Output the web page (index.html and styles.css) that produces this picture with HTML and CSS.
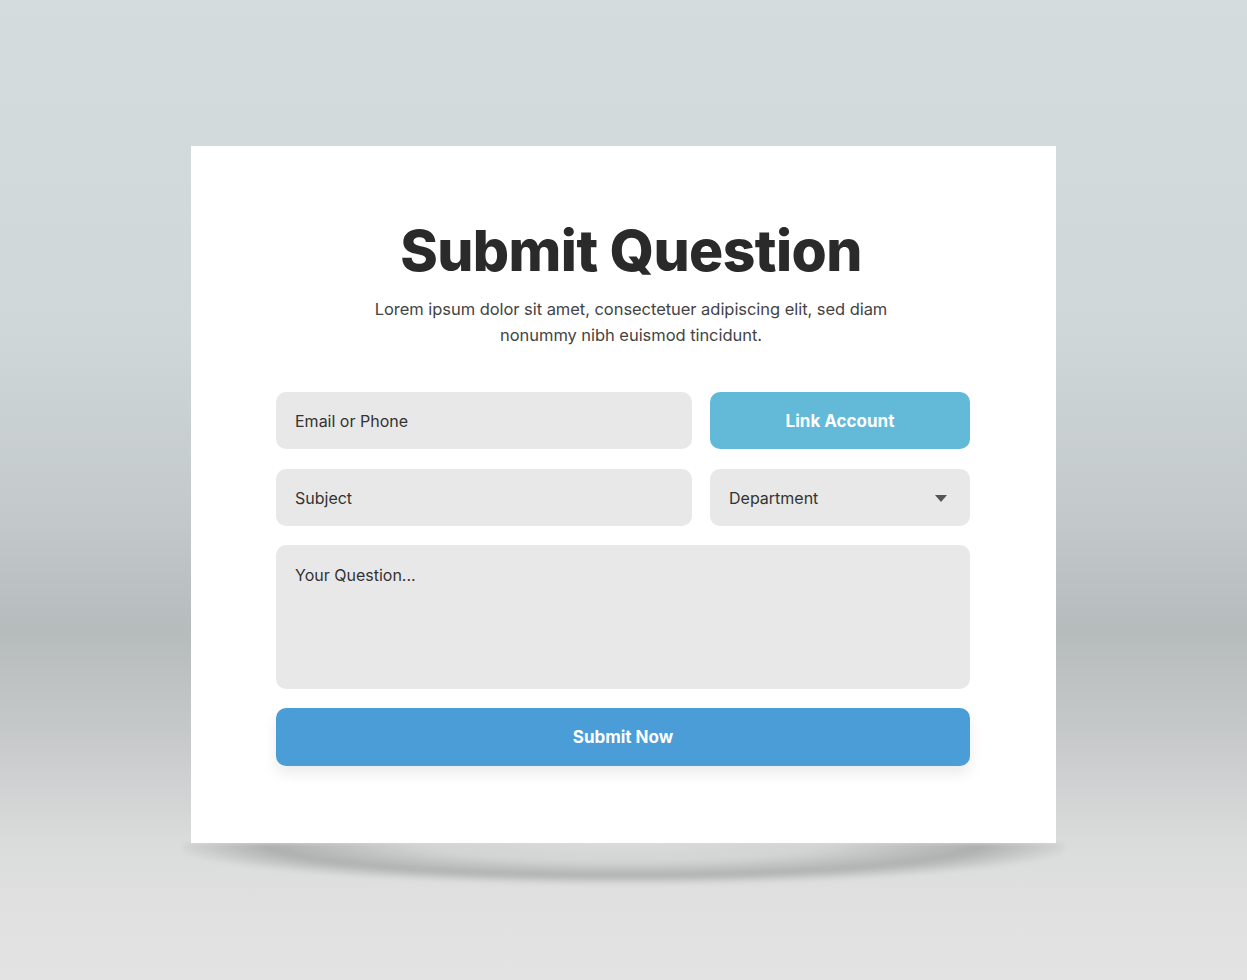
FILE: index.html
```html
<!DOCTYPE html>
<html lang="en">
<head>
    <meta charset="UTF-8">
    <meta name="viewport" content="width=device-width, initial-scale=1.0">
    <title>Submit Question</title>
    <link rel="stylesheet" href="styles.css">
</head>
<body>
    <div class="stage">
        <div class="question-card">
            <div class="card-header">
                <h1>Submit Question</h1>
                <p>Lorem ipsum dolor sit amet, consectetuer adipiscing elit, sed diam<br>nonummy nibh euismod tincidunt.</p>
            </div>

            <form class="question-form">
                <div class="form-row">
                    <input type="text" class="field" placeholder="Email or Phone">
                    <button type="button" class="btn-link">Link Account</button>
                </div>
                <div class="form-row">
                    <input type="text" class="field" placeholder="Subject">
                    <div class="select-wrap">
                        <select class="field">
                            <option>Department</option>
                        </select>
                        <svg class="caret" width="14" height="9" viewBox="0 0 14 9"><path d="M1 1h12L7 8z" fill="#555"/></svg>
                    </div>
                </div>
                <textarea class="field question" placeholder="Your Question..."></textarea>
                <button type="submit" class="btn-submit">Submit Now</button>
            </form>
        </div>
    </div>
</body>
</html>
```

FILE: styles.css
```css
/* Base page with the soft studio backdrop */
body {
    margin: 0;
    padding: 0;
    font-family: 'Inter', 'Open Sans', sans-serif;
    color: #333;
    min-height: 980px;
    background: linear-gradient(to bottom,
        #d4dcdd 0px,
        #d0d7d8 330px,
        #c3c9ca 520px,
        #b6bbbc 630px,
        #c7cacb 740px,
        #dadbdb 840px,
        #e0e0e0 900px,
        #e3e3e3 980px);
}

.stage {
    padding-top: 146px;
    display: flex;
    justify-content: center;
}

/* White card */
.question-card {
    position: relative;
    width: 865px;
    height: 697px;
    box-sizing: border-box;
    background-color: #fff;
    padding: 66px 86px 0 85px;
}
/* curved floor shadow under the card */
.question-card::after {
    content: "";
    position: absolute;
    left: -8px;
    right: -8px;
    top: 697px;
    height: 42px;
    background: radial-gradient(ellipse 52% 100% at 50% 0%, rgba(0, 0, 0, 0) 0%, rgba(0, 0, 0, 0.04) 45%, rgba(0, 0, 0, 0.2) 78%, rgba(0, 0, 0, 0) 100%);
    filter: blur(2px);
    z-index: -1;
}

.card-header {
    text-align: center;
    margin-left: 16px;
}
.card-header h1 {
    margin: 0;
    font-size: 57px;
    font-weight: 800;
    letter-spacing: -0.6px;
    color: #2a2a2a;
    line-height: 78px;
}
.card-header p {
    margin: 6px 0 0;
    font-size: 16.5px;
    letter-spacing: -0.05px;
    line-height: 26px;
    color: #444;
}

/* Form */
.question-form {
    margin-top: 44px;
    display: flex;
    flex-direction: column;
    gap: 19px;
}
.form-row {
    display: grid;
    grid-template-columns: 416px 1fr;
    gap: 18px;
}
.form-row + .form-row {
    margin-top: 1px;
}

.field {
    height: 57px;
    width: 100%;
    box-sizing: border-box;
    border: none;
    border-radius: 10px;
    background-color: #e8e8e8;
    padding: 0 19px;
    font-family: inherit;
    font-size: 16px;
    color: #333;
    outline: none;
}
.field::placeholder {
    color: #333;
}

.select-wrap {
    position: relative;
}
.select-wrap select {
    appearance: none;
    -webkit-appearance: none;
}
.caret {
    position: absolute;
    right: 22px;
    top: 25px;
    pointer-events: none;
}

textarea.question {
    height: 144px;
    padding-top: 19px;
    resize: none;
    line-height: 22px;
}

button {
    height: 57px;
    border: none;
    border-radius: 10px;
    color: #fff;
    font-family: inherit;
    font-size: 17px;
    font-weight: 700;
    cursor: pointer;
}
.btn-link {
    background-color: #62bad8;
}
.btn-submit {
    height: 58px;
    background-color: #4a9dd6;
    box-shadow: 0 8px 14px rgba(0, 0, 0, 0.08);
}
```
